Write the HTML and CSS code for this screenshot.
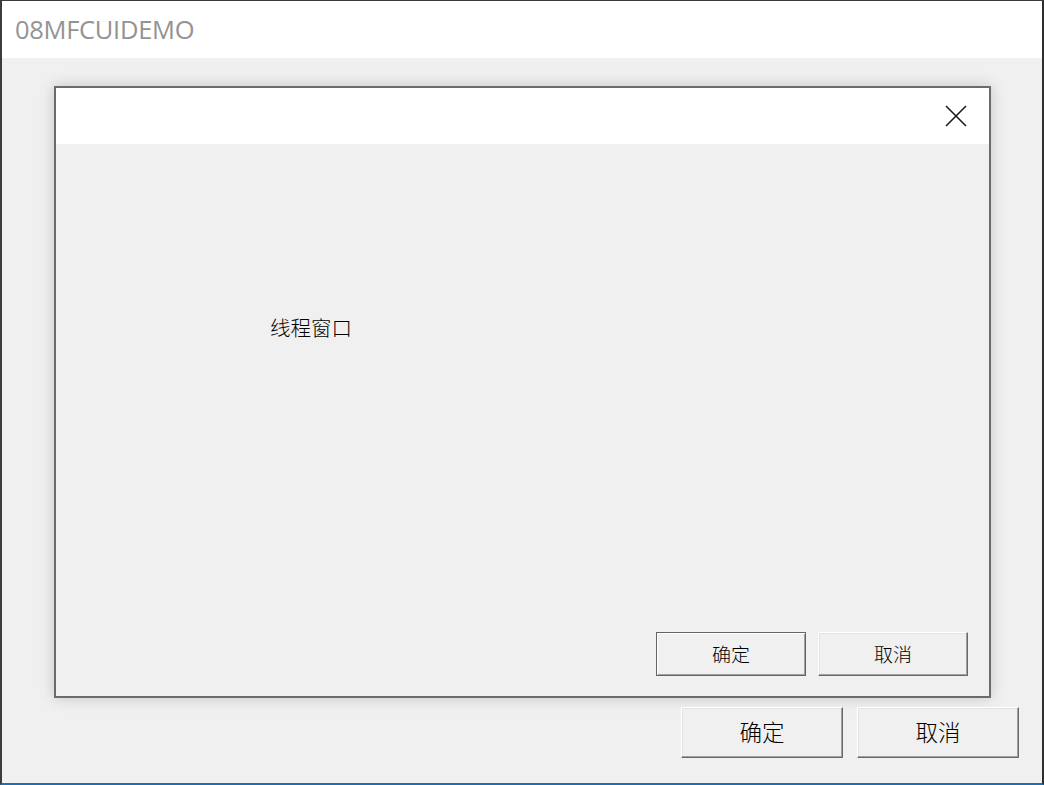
FILE: index.html
```html
<!DOCTYPE html>
<html lang="zh">
<head>
<meta charset="utf-8">
<title>08MFCUIDEMO</title>
<link rel="stylesheet" href="styles.css">
</head>
<body>
<div class="window">
  <div class="titlebar"><span class="title">08MFCUIDEMO</span></div>
  <div class="client">
    <div class="dialog">
      <div class="dlg-titlebar">
        <svg class="close" width="22" height="22" viewBox="0 0 22 22"><path d="M1 1 L21 21 M21 1 L1 21" stroke="#1a1a1a" stroke-width="1.6" fill="none"/></svg>
      </div>
      <div class="dlg-body">
        <div class="label">线程窗口</div>
        <div class="dlg-buttons">
          <button class="btn btn-default">确定</button>
          <button class="btn">取消</button>
        </div>
      </div>
    </div>
    <div class="main-buttons">
      <button class="btn btn-big">确定</button>
      <button class="btn btn-big">取消</button>
    </div>
  </div>
</div>
</body>
</html>
```
FILE: styles.css
```css
* { box-sizing: border-box; }
html, body { margin: 0; padding: 0; }
body {
  width: 1044px;
  height: 785px;
  overflow: hidden;
  background: #f0f0f0;
  font-family: "Noto Sans CJK SC", sans-serif;
}
.window {
  width: 1044px;
  height: 785px;
  display: flex;
  flex-direction: column;
  border-left: 2px solid #3c3c3c;
  border-right: 2px solid #2e2e2e;
  border-top: 1px solid #3c3c3c;
  border-bottom: 2px solid #1a6fb5;
  background: #f0f0f0;
}
.titlebar {
  height: 57px;
  flex: none;
  background: #ffffff;
  display: flex;
  align-items: center;
  padding-left: 13px;
}
.title {
  font-family: "Open Sans", "Noto Sans", sans-serif;
  font-size: 25.5px;
  color: #939393;
  letter-spacing: -0.3px;
  margin-top: -1px;
}
.client {
  flex: 1;
  display: flex;
  flex-direction: column;
  padding: 28px 23px 0 52px;
}
.dialog {
  width: 937px;
  height: 612px;
  border: 2px solid #6b6b6b;
  background: #f0f0f0;
  box-shadow: 0 0 14px rgba(0,0,0,0.18);
  display: flex;
  flex-direction: column;
}
.dlg-titlebar {
  height: 56px;
  flex: none;
  background: #ffffff;
  display: flex;
  justify-content: flex-end;
  align-items: center;
  padding-right: 22px;
}
.close { display: block; margin-top: -1px; }
.dlg-body {
  flex: 1;
  display: flex;
  flex-direction: column;
  justify-content: space-between;
  padding: 171px 21px 20px 214px;
}
.label {
  font-size: 20.5px;
  line-height: 24px;
  font-weight: 300;
  color: #000;
}
.dlg-buttons {
  display: flex;
  justify-content: flex-end;
  gap: 12px;
}
.btn {
  width: 150px;
  height: 44px;
  font-family: "Noto Sans CJK SC", sans-serif;
  font-size: 19px;
  font-weight: 300;
  color: #000;
  background: #f0f0f0;
  border: 1px solid;
  border-color: #ffffff #696969 #696969 #ffffff;
  box-shadow: inset -1px -1px 0 #a0a0a0, inset 1px 1px 0 #e3e3e3;
  padding: 0 0 1px 0;
  margin: 0;
  line-height: 1;
}
.btn-default {
  border-color: #646464;
  box-shadow: inset 1px 1px 0 #ffffff, inset -1px -1px 0 #a0a0a0;
}
.main-buttons {
  display: flex;
  justify-content: flex-end;
  gap: 14px;
  margin-top: 9px;
}
.btn-big {
  width: 162px;
  height: 51px;
  font-size: 22.5px;
  padding-bottom: 3px;
}
```
